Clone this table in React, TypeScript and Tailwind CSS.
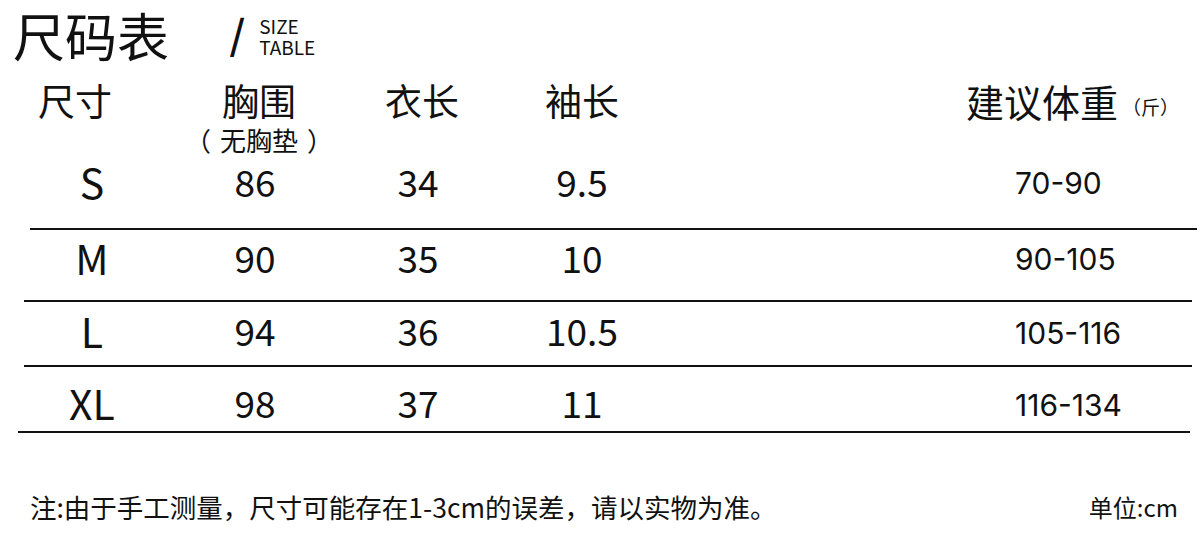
import React from "react";

const cjk = { fontFamily: '"Noto Sans CJK SC", "Noto Sans", sans-serif' };
const geo = { fontFamily: 'Inter, "Noto Sans", sans-serif' };

type Row = { s: string; a: string; b: string; c: string; w: string; h: string; pad: string; wpad: string };

const rows: Row[] = [
  { s: "S", a: "86", b: "34", c: "9.5", w: "70-90", h: "h-[70px]", pad: "pb-[24px]", wpad: "pt-[4px]" },
  { s: "M", a: "90", b: "35", c: "10", w: "90-105", h: "h-[70px]", pad: "pb-[16px]", wpad: "pt-[4px]" },
  { s: "L", a: "94", b: "36", c: "10.5", w: "105-116", h: "h-[63px]", pad: "pb-[6px]", wpad: "pt-[4px]" },
  { s: "XL", a: "98", b: "37", c: "11", w: "116-134", h: "h-[64px]", pad: "pt-[6px]", wpad: "pt-[6px]" },
];

const lines = [
  "ml-[30px] w-[1167px]",
  "ml-[24px] w-[1168px]",
  "ml-[24px] w-[1168px]",
  "ml-[18px] w-[1172px]",
];

export default function App() {
  return (
    <div className="w-[1200px] h-[534px] bg-white text-[#111] overflow-hidden" style={cjk}>
      {/* Title */}
      <div className="h-[80px] flex items-start pl-[13px] pt-[5px]">
        <div className="text-[52px] leading-[60px] whitespace-nowrap">尺码表</div>
        <div className="ml-[60px] mt-[8px] text-[45px] leading-none" style={geo}>/</div>
        <div className="ml-[14px] mt-[10px] flex flex-col text-[19px] leading-[21px]" style={cjk}>
          <span>SIZE</span>
          <span>TABLE</span>
        </div>
      </div>

      {/* Header */}
      <div className="h-[78px] flex items-start pl-[30px] pt-[2px]">
        <div className="w-[90px] text-center text-[37px] leading-none">尺寸</div>
        <div className="ml-[77px] w-[124px] flex flex-col items-center">
          <span className="text-[37px] leading-none">胸围</span>
          <span className="text-[26px] leading-none mt-[8px] whitespace-nowrap flex">
            <span className="mr-[9px]">（</span>
            <span>无胸垫</span>
            <span className="ml-[9px]">）</span>
          </span>
        </div>
        <div className="ml-[51px] w-[100px] text-center text-[37px] leading-none">衣长</div>
        <div className="ml-[60px] w-[100px] text-center text-[37px] leading-none">袖长</div>
        <div className="ml-[334px] flex items-end whitespace-nowrap">
          <span className="text-[38px] leading-none">建议体重</span>
          <span className="text-[19px] leading-none ml-[4px] mb-[4px]">（斤）</span>
        </div>
      </div>

      {/* Rows */}
      {rows.map((r, i) => (
        <div key={r.s}>
          <div className={`${r.h} ${r.pad} flex items-center pl-[42px]`}>
            <div className="w-[100px] text-center text-[41px] leading-none">{r.s}</div>
            <div className="ml-[63px] w-[100px] text-center text-[37px] leading-none">{r.a}</div>
            <div className="ml-[63px] w-[100px] text-center text-[37px] leading-none">{r.b}</div>
            <div className="ml-[64px] w-[100px] text-center text-[37px] leading-none">{r.c}</div>
            <div className={`ml-[383px] ${r.wpad} text-[30px] leading-none`} style={geo}>{r.w}</div>
          </div>
          <div className={`${lines[i]} h-[2px] bg-[#111]`} />
        </div>
      ))}

      {/* Footer */}
      <div className="mt-[61px] flex items-center justify-between pl-[30px] pr-[22px] leading-none whitespace-nowrap">
        <span className="text-[26.5px]">注:由于手工测量，尺寸可能存在1-3cm的误差，请以实物为准。</span>
        <span className="text-[24px]">单位:cm</span>
      </div>
    </div>
  );
}
